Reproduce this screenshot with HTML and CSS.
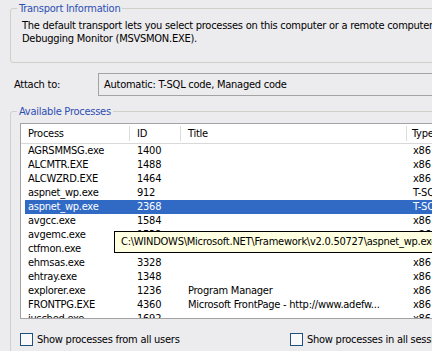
FILE: index.html
```html
<!DOCTYPE html>
<html lang="en">
<head>
  <meta charset="UTF-8" />
  <title>Attach to Process</title>
  <link rel="stylesheet" href="styles.css">
</head>
<body>
  <div class="dialog">
    <fieldset class="group transport">
      <legend>Transport Information</legend>
      <p class="info">The default transport lets you select processes on this computer or a remote computer running the Remote<br>Debugging Monitor (MSVSMON.EXE).</p>
    </fieldset>

    <div class="attach-row">
      <span class="attach-label">Attach to:</span>
      <div class="attach-field">Automatic: T-SQL code, Managed code</div>
    </div>

    <fieldset class="group processes">
      <legend>Available Processes</legend>
      <div class="process-list">
        <div class="list-header">
          <span>Process</span>
          <span>ID</span>
          <span>Title</span>
          <span>Type</span>
        </div>
        <div class="rows" id="rows"></div>
        <div class="tooltip">C:\WINDOWS\Microsoft.NET\Framework\v2.0.50727\aspnet_wp.exe</div>
      </div>

      <div class="options">
        <label class="check"><span class="box"></span>Show processes from all users</label>
        <label class="check"><span class="box"></span>Show processes in all sessions</label>
      </div>
    </fieldset>
  </div>

  <script>
    const processes = [
      ["AGRSMMSG.exe", 1400, "", "x86"],
      ["ALCMTR.EXE", 1488, "", "x86"],
      ["ALCWZRD.EXE", 1464, "", "x86"],
      ["aspnet_wp.exe", 912, "", "T-SQL, x86"],
      ["aspnet_wp.exe", 2368, "", "T-SQL, x86", true],
      ["avgcc.exe", 1584, "", "x86"],
      ["avgemc.exe", 1532, "", "x86"],
      ["ctfmon.exe", 2044, "", "x86"],
      ["ehmsas.exe", 3328, "", "x86"],
      ["ehtray.exe", 1348, "", "x86"],
      ["explorer.exe", 1236, "Program Manager", "x86"],
      ["FRONTPG.EXE", 4360, "Microsoft FrontPage - http://www.adefw...", "x86"],
      ["jusched.exe", 1692, "", "x86"]
    ];

    const rows = document.getElementById("rows");
    processes.forEach(p => {
      const div = document.createElement("div");
      div.className = "row" + (p[4] ? " selected" : "");
      div.innerHTML = `
        <span>${p[0]}</span>
        <span>${p[1]}</span>
        <span>${p[2]}</span>
        <span>${p[3]}</span>
      `;
      rows.appendChild(div);
    });
  </script>
</body>
</html>
```

FILE: styles.css
```css
body {
  margin: 0;
  background-color: #ecebee;
  font-family: 'DejaVu Sans Condensed', 'DejaVu Sans', sans-serif;
  font-size: 11px;
  line-height: 13px;
  letter-spacing: -0.25px;
  color: #000;
  overflow: hidden;
  height: 351px;
}

.dialog {
  width: 620px;
}

.group {
  margin: 0 0 0 10px;
  border: 1px solid #d0d0c8;
  border-radius: 3px;
  min-inline-size: 0;
}

.group legend {
  color: #2d4fb3;
  padding: 0 2px;
  line-height: 13px;
}

.transport {
  margin-top: 2px;
  padding: 4px 11px 17px 11px;
}

.transport legend {
  margin-left: -5px;
}

.info {
  margin: 0;
  white-space: nowrap;
}

.attach-row {
  display: flex;
  align-items: center;
  margin-top: 10px;
  padding-left: 14px;
}

.attach-label {
  width: 84px;
}

.attach-field {
  flex: 1;
  height: 21px;
  line-height: 21px;
  padding-left: 5px;
  border: 1px solid #a3a3a3;
  border-right: none;
}

.processes {
  margin-top: 9px;
  padding: 5px 0 30px 9px;
}

.processes legend {
  margin-left: -3px;
}

.process-list {
  position: relative;
  height: 194px;
  border: 1px solid #a3a3a3;
  border-right: none;
  background-color: #fff;
  overflow: hidden;
}

.list-header {
  display: grid;
  grid-template-columns: 109px 51px 226px 1fr;
  height: 19px;
  border-bottom: 1px solid #d9d9d9;
}

.list-header span {
  padding-left: 7px;
  margin: 2px 0;
  line-height: 15px;
  border-right: 1px solid #dcdcdc;
}

.list-header span:last-child {
  padding-left: 5px;
  border-right: none;
}

.row {
  display: grid;
  grid-template-columns: 105px 51px 226px 1fr;
  margin-left: 4px;
  height: 14px;
  line-height: 14px;
  white-space: nowrap;
}

.row span {
  padding-left: 7px;
  overflow: hidden;
}

.row span:first-child {
  padding-left: 3px;
}

.row span:last-child {
  padding-left: 6px;
}

.row.selected {
  background-color: #316ac5;
  color: #fff;
}

.tooltip {
  position: absolute;
  left: 93px;
  top: 107px;
  height: 20px;
  line-height: 20px;
  padding: 0 6px;
  white-space: nowrap;
  background-color: #ffffe1;
  border: 1px solid #000;
}

.options {
  display: flex;
  margin-top: 13px;
  height: 14px;
}

.check {
  display: flex;
  flex: 0 0 270px;
  align-items: center;
}

.box {
  flex: none;
  width: 11px;
  height: 11px;
  margin-right: 4px;
  border: 1px solid #1c5180;
  background-color: #f9f9f9;
}
```
